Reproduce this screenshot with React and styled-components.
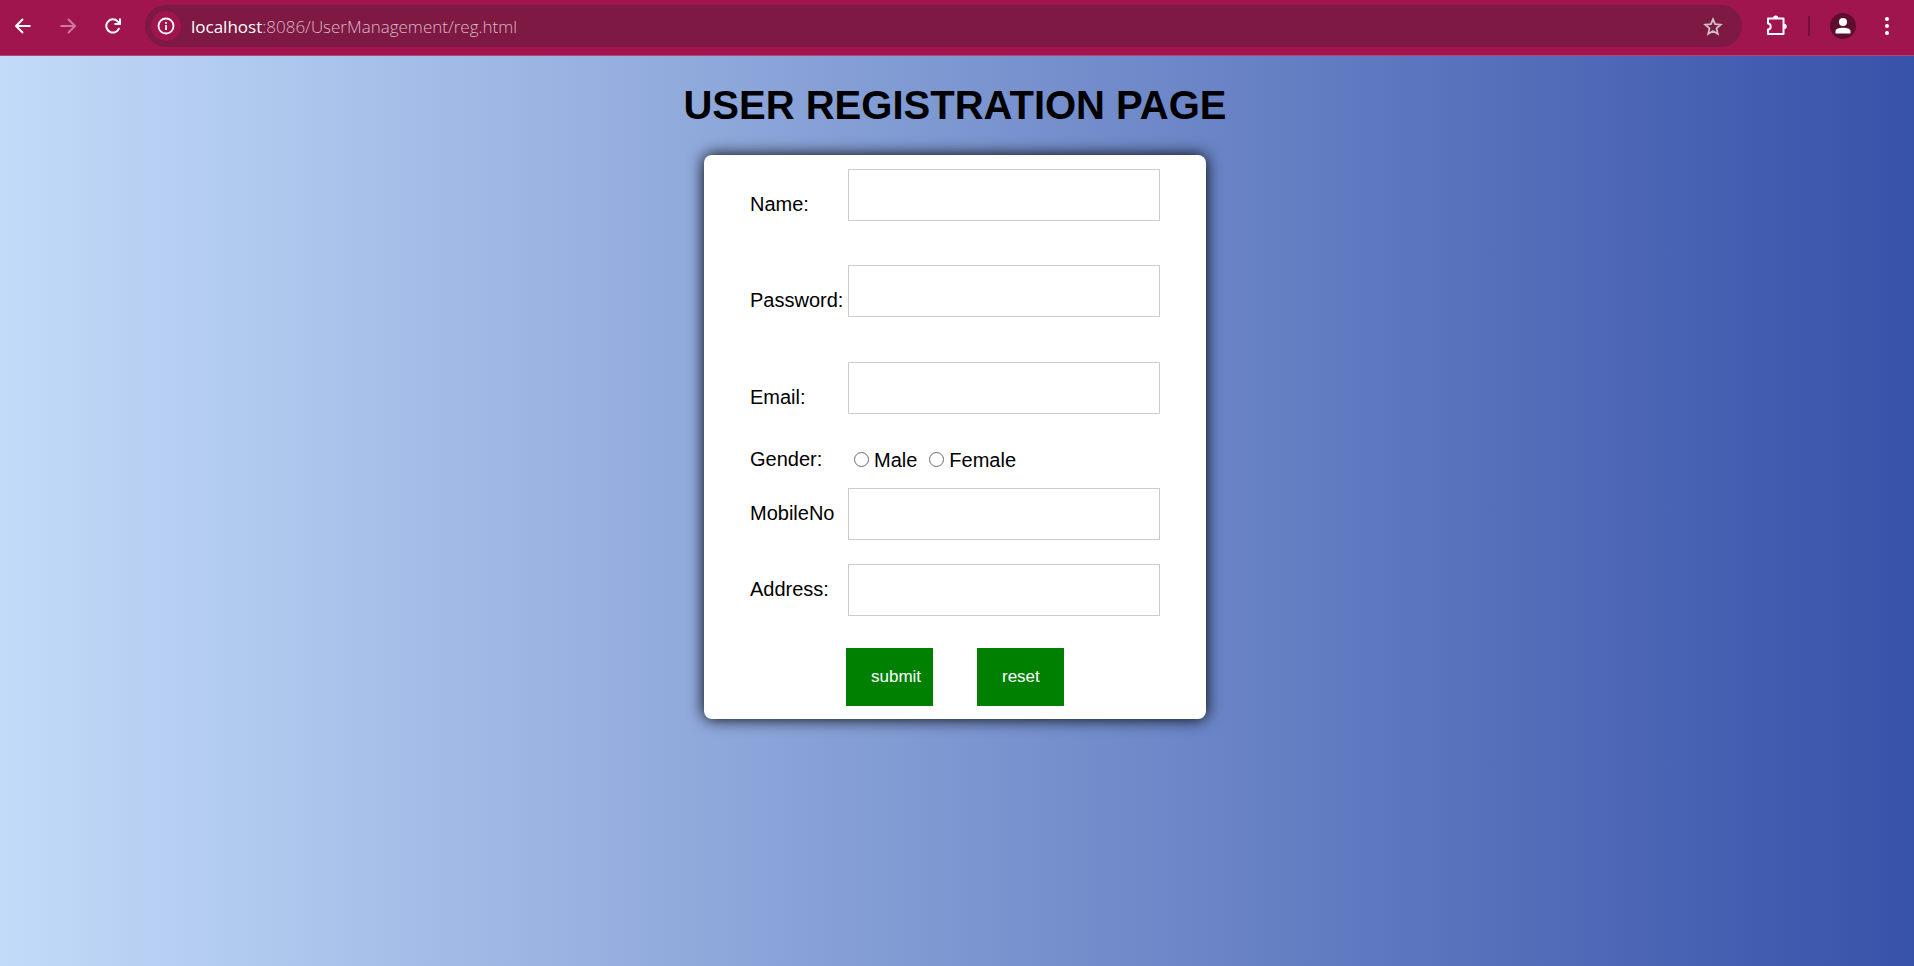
import React from "react";
import styled, { createGlobalStyle } from "styled-components";

const GlobalStyle = createGlobalStyle`
  *, *::before, *::after { box-sizing: border-box; }
  body {
    margin: 0;
    font-family: "Liberation Sans", Arial, sans-serif;
    color: #000;
  }
`;

const Window = styled.div`
  min-height: 100vh;
  display: flex;
  flex-direction: column;
`;

const Toolbar = styled.header`
  display: flex;
  align-items: center;
  height: 56px;
  padding: 0 12px 4px 8px;
  background: #a1154e;
  border-bottom: 1px solid #b5447a;
`;

const IconButton = styled.button`
  display: flex;
  align-items: center;
  justify-content: center;
  flex: none;
  width: ${(p) => p.$size || 30}px;
  height: ${(p) => p.$size || 30}px;
  padding: 0;
  border: 0;
  border-radius: 50%;
  background: ${(p) => p.$fill || "transparent"};
  color: ${(p) => p.$color || "#fff"};
`;

const Navigation = styled.nav`
  display: flex;
  gap: 15px;
  margin-right: 17px;
`;

const AddressBar = styled.div`
  display: flex;
  align-items: center;
  flex: 1;
  min-width: 0;
  height: 42px;
  padding: 0 14px 0 6px;
  border-radius: 21px;
  background: #7d1942;
`;

const Url = styled.span`
  flex: 1;
  padding: 2px 0 0 10px;
  font: 300 17px/24px "Open Sans", "Noto Sans", sans-serif;
  color: #dfb6c7;
  white-space: nowrap;
`;

const Host = styled.span`
  font-weight: 400;
  color: #fff;
`;

const Tools = styled.div`
  display: flex;
  align-items: center;
  margin-left: 20px;
`;

const Divider = styled.span`
  width: 2px;
  height: 20px;
  margin: 0 20px 0 16px;
  background: #6e1238;
`;

const MenuSlot = styled.div`
  margin-left: 16px;
`;

const Page = styled.main`
  flex: 1;
  display: flex;
  flex-direction: column;
  align-items: center;
  padding: 26px 4px 26px 0;
  background: linear-gradient(90deg, #c2dbf9, #3752a9);
`;

const Title = styled.h1`
  margin: 0;
  font-size: 40px;
  line-height: 46px;
`;

const Card = styled.form`
  width: 502px;
  max-width: 100%;
  margin-top: 27px;
  padding: 14px 46px 13px;
  border-radius: 8px;
  background: #fff;
  box-shadow: 0 0 16px #000;
`;

const Row = styled.div`
  display: grid;
  grid-template-columns: 98px 1fr;
  align-items: start;
  margin-bottom: ${(p) => p.$gap}px;
`;

const Label = styled.label`
  padding-top: ${(p) => p.$drop || 0}px;
  font-size: 20px;
  line-height: 23px;
`;

const TextBox = styled.input`
  width: 100%;
  height: 52px;
  padding: 12px 20px;
  border: 1px solid #ccc;
  border-radius: 0;
  background: #fff;
  font: 16px "Liberation Sans", Arial, sans-serif;
`;

const Choices = styled.div`
  display: flex;
  gap: 12px;
  padding: 1px 0 0 6px;
`;

const Choice = styled.label`
  display: flex;
  align-items: center;
  gap: 5px;
  font-size: 20px;
  line-height: 23px;
`;

const Radio = styled.input`
  appearance: none;
  width: 15px;
  height: 15px;
  margin: 0 0 2px;
  border: 1px solid #6a6a6a;
  border-radius: 50%;
  background: #fff;

  &:checked {
    border: 5px solid #0075ff;
  }
`;

const Actions = styled.div`
  display: flex;
  gap: 44px;
  padding-left: 96px;
`;

const ActionButton = styled.button`
  width: 87px;
  height: 58px;
  padding: 0 0 0 25px;
  border: 0;
  background: green;
  color: #fff;
  font: 17px "Liberation Sans", Arial, sans-serif;
  text-align: left;
`;

function Arrow({ flip }) {
  return (
    <svg width="16" height="16" viewBox="0 0 16 16" fill="none" stroke="currentColor" strokeWidth="2">
      <path d={flip ? "M0.5 8H14.5M8 1L15 8L8 15" : "M15.5 8H1.5M8 1L1 8L8 15"} />
    </svg>
  );
}

function Reload() {
  return (
    <svg width="16" height="16" viewBox="0 0 16 16" fill="none" stroke="currentColor" strokeWidth="2">
      <path d="M14.2 10A6.6 6.6 0 1 1 12.7 3.4L14.8 5.5" />
      <path d="M15 0.5V6H9.5" />
    </svg>
  );
}

function Info() {
  return (
    <svg width="18" height="18" viewBox="0 0 18 18" fill="none" stroke="currentColor" strokeWidth="1.8">
      <circle cx="9" cy="9" r="7.5" />
      <path d="M9 8V13M9 5V6.8" />
    </svg>
  );
}

function Star() {
  return (
    <svg width="20" height="20" viewBox="0 0 20 20" fill="none" stroke="currentColor" strokeWidth="1.8">
      <path d="M10 3.2L12.1 8.2L17.7 8.7L13.5 12.4L14.8 17.9L10 15L5.2 17.9L6.5 12.4L2.3 8.7L7.9 8.2Z" />
    </svg>
  );
}

function Puzzle() {
  return (
    <svg width="22" height="22" viewBox="0 0 22 22" fill="none" stroke="currentColor" strokeWidth="2" strokeLinejoin="round">
      <path d="M2 3.5H17.5V19H2V14.6C5.6 14.4 5.6 8.6 2 8.4Z" />
      <path d="M7 3.2A2.7 2.7 0 0 1 12.4 3.2ZM18 8.8A2.7 2.7 0 0 1 18 14.2Z" fill="currentColor" stroke="none" />
    </svg>
  );
}

function Person() {
  return (
    <svg width="16" height="16" viewBox="0 0 16 16" fill="currentColor">
      <circle cx="8" cy="4" r="4" />
      <path d="M0.5 15.5V13C0.5 8.5 15.5 8.5 15.5 13V15.5Z" />
    </svg>
  );
}

function Dots() {
  return (
    <svg width="4" height="18" viewBox="0 0 4 18" fill="currentColor">
      <circle cx="2" cy="2" r="2" />
      <circle cx="2" cy="9" r="2" />
      <circle cx="2" cy="16" r="2" />
    </svg>
  );
}

const accountFields = [
  { id: "name", label: "Name:", type: "text", gap: 44, drop: 24 },
  { id: "password", label: "Password:", type: "password", gap: 45, drop: 24 },
  { id: "email", label: "Email:", type: "email", gap: 34, drop: 24 },
];

const contactFields = [
  { id: "mobile", label: "MobileNo", type: "tel", gap: 24, drop: 14 },
  { id: "address", label: "Address:", type: "text", gap: 32, drop: 14 },
];

function Field({ id, label, type, gap, drop }) {
  return (
    <Row $gap={gap}>
      <Label htmlFor={id} $drop={drop}>{label}</Label>
      <TextBox id={id} name={id} type={type} />
    </Row>
  );
}

export default function App() {
  return (
    <Window>
      <GlobalStyle />
      <Toolbar>
        <Navigation>
          <IconButton aria-label="Back"><Arrow /></IconButton>
          <IconButton aria-label="Forward" $color="#cf779d"><Arrow flip /></IconButton>
          <IconButton aria-label="Reload"><Reload /></IconButton>
        </Navigation>
        <AddressBar>
          <IconButton aria-label="Site information" $fill="#a1154e"><Info /></IconButton>
          <Url><Host>localhost</Host>:8086/UserManagement/reg.html</Url>
          <IconButton aria-label="Bookmark" $color="#cfc0c7"><Star /></IconButton>
        </AddressBar>
        <Tools>
          <IconButton aria-label="Extensions"><Puzzle /></IconButton>
          <Divider />
          <IconButton aria-label="Profile" $size={26} $fill="#5e0d2f"><Person /></IconButton>
          <MenuSlot>
            <IconButton aria-label="Menu"><Dots /></IconButton>
          </MenuSlot>
        </Tools>
      </Toolbar>
      <Page>
        <Title>USER REGISTRATION PAGE</Title>
        <Card onSubmit={(e) => e.preventDefault()}>
          {accountFields.map((f) => <Field key={f.id} {...f} />)}
          <Row $gap={16} role="radiogroup" aria-labelledby="gender">
            <Label as="span" id="gender">Gender:</Label>
            <Choices>
              <Choice><Radio type="radio" name="gender" value="male" />Male</Choice>
              <Choice><Radio type="radio" name="gender" value="female" />Female</Choice>
            </Choices>
          </Row>
          {contactFields.map((f) => <Field key={f.id} {...f} />)}
          <Actions>
            <ActionButton type="submit">submit</ActionButton>
            <ActionButton type="reset">reset</ActionButton>
          </Actions>
        </Card>
      </Page>
    </Window>
  );
}
